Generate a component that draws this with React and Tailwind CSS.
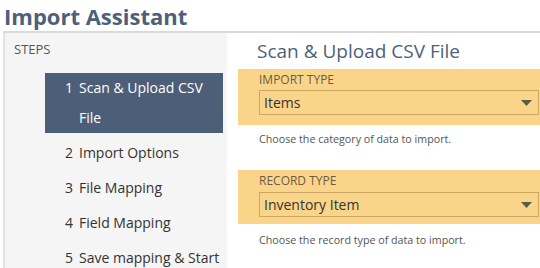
import React from "react";

function Arrow() {
  return (
    <svg width="11" height="6" viewBox="0 0 11 6" className="block">
      <path d="M0 0 L11 0 L5.5 6 Z" fill="#5a5d4c" />
    </svg>
  );
}

function Field({ label, value, labelH, pb }) {
  return (
    <div className={`bg-[#fad589] pl-[21px] ${pb}`}>
      <div className={`${labelH} flex items-center text-[12px] text-[#6a5b45] uppercase leading-none`}>{label}</div>
      <div className="h-[25px] border border-[#c9a764] flex items-center justify-between pl-[4px] pr-[6px] mr-[1px]">
        <span className="text-[14px] text-[#333] leading-none">{value}</span>
        <Arrow />
      </div>
    </div>
  );
}

export default function App() {
  const steps = ["Import Options", "File Mapping", "Field Mapping", "Save mapping & Start"];
  return (
    <div className="w-[540px] h-[268px] overflow-hidden bg-white font-['Open_Sans',sans-serif]">
      <div className="h-[31px] pl-[4px] flex items-center">
        <h1 className="text-[22px] font-bold text-[#4d5f79] leading-none whitespace-nowrap">Import Assistant</h1>
      </div>
      <div className="ml-[3px] border-t-2 border-[#dadada] flex h-[240px]">
        <div className="w-[224px] bg-[#f5f5f5] border-l-2 border-[#e2e2e2] shrink-0">
          <div className="pl-[9px] pt-[8px] h-[40px] text-[13px] text-[#555] leading-[16px]">STEPS</div>
          <div className="ml-[40px] mr-[4px] bg-[#4d5e78] text-white text-[14px] leading-[30px] pl-[20px] flex">
            <span className="w-[14px] shrink-0">1</span>
            <span>Scan &amp; Upload CSV<br />File</span>
          </div>
          <div className="pt-[2px]">
            {steps.map((s, i) => (
              <div key={s} className="h-[35px] flex items-center pl-[60px] text-[14px] text-[#333] whitespace-nowrap">
                <span className="w-[14px] shrink-0">{i + 2}</span>
                <span>{s}</span>
              </div>
            ))}
          </div>
        </div>
        <div className="flex-1 pl-[11px]">
          <div className="h-[36px] flex items-center pl-[19px] text-[19px] text-[#4d5f79] leading-none whitespace-nowrap">
            Scan &amp; Upload CSV File
          </div>
          <Field label="Import Type" value="Items" labelH="h-[21px]" pb="pb-[10px]" />
          <div className="pl-[21px] mt-[6px] text-[10.7px] leading-[16px] text-[#555]">Choose the category of data to import.</div>
          <div className="h-[23px]"></div>
          <Field label="Record Type" value="Inventory Item" labelH="h-[22px]" pb="pb-[7px]" />
          <div className="pl-[21px] mt-[8px] text-[10.7px] leading-[16px] text-[#555]">Choose the record type of data to import.</div>
        </div>
      </div>
    </div>
  );
}
